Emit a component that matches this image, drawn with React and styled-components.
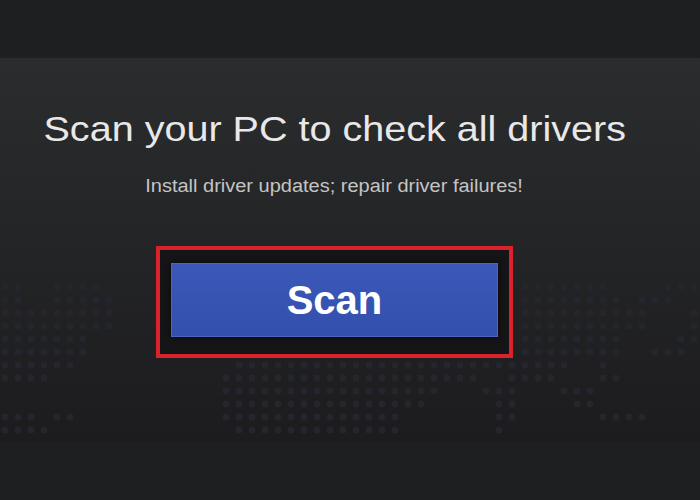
import React from "react";
import styled, { createGlobalStyle } from "styled-components";

const GlobalStyle = createGlobalStyle`
  html, body {
    margin: 0;
    padding: 0;
    background: #1e1e20;
  }
  body {
    font-family: "Liberation Sans", Arial, sans-serif;
  }
`;

// dotted world map, one list of [fromX, toX] spans per row
const MAP_ROWS = [
  [[0, 20], [55, 100], [525, 612], [660, 700]],
  [[0, 25], [55, 115], [525, 622], [640, 672]],
  [[0, 115], [525, 650], [685, 700]],
  [[0, 115], [525, 650], [685, 700]],
  [[0, 85], [525, 625], [675, 695]],
  [[0, 85], [525, 625], [655, 685]],
  [[0, 80], [230, 575], [600, 612]],
  [[0, 50], [220, 480], [500, 560], [600, 625]],
  [[45, 55], [220, 440], [475, 515], [555, 600], [630, 640]],
  [[45, 55], [220, 425], [490, 515], [570, 600], [630, 640]],
  [[0, 40], [55, 80], [220, 400], [495, 515], [570, 575], [600, 650]],
  [[0, 50], [235, 400], [495, 505]],
];

const DotMap = () => {
  const dots = [];
  MAP_ROWS.forEach((spans, j) => {
    for (let i = 0; i < 54; i++) {
      const x = 5 + i * 13;
      if (spans.some(([a, b]) => x >= a && x <= b)) {
        dots.push(<circle key={`${i}-${j}`} cx={x} cy={11 + j * 13} r="3.5" />);
      }
    }
  });
  return (
    <MapSvg width="700" height="166" viewBox="0 0 700 166">
      <g fill="#24252d">{dots}</g>
    </MapSvg>
  );
};

export default function App() {
  return (
    <>
      <GlobalStyle />
      <Page>
        <Bar />
        <Panel>
          <DotMap />
          <Content>
            <Title>Scan your PC to check all drivers</Title>
            <Subtitle>Install driver updates; repair driver failures!</Subtitle>
            <Highlight>
              <ScanButton>Scan</ScanButton>
            </Highlight>
          </Content>
        </Panel>
        <Bar />
      </Page>
    </>
  );
}

const Page = styled.div`
  width: 700px;
  height: 500px;
  display: flex;
  flex-direction: column;
  overflow: hidden;
`;

const Bar = styled.div`
  height: 58px;
  background: #1e1f21;
  flex-shrink: 0;
`;

const Panel = styled.div`
  position: relative;
  flex: 1;
  background: linear-gradient(180deg, #2b2c2e 0%, #252628 40%, #1c1c1e 100%);
  overflow: hidden;
`;

const MapSvg = styled.svg`
  position: absolute;
  left: 0;
  bottom: 0;
`;

const Content = styled.div`
  position: relative;
  width: 669px;
  display: flex;
  flex-direction: column;
  align-items: center;
  padding-top: 51px;
`;

const Title = styled.h1`
  margin: 0;
  font-weight: normal;
  font-size: 35px;
  line-height: 40px;
  color: #e8e8e8;
  white-space: nowrap;
  transform: scaleX(1.13);
`;

const Subtitle = styled.p`
  margin: 26px 0 0;
  font-size: 18px;
  line-height: 22px;
  color: #c4c4c4;
  white-space: nowrap;
  transform: scaleX(1.11);
`;

const Highlight = styled.div`
  margin-top: 49px;
  border: 4px solid #d9222b;
  padding: 13px 11px 17px 11px;
  background: #151517;
  display: flex;
`;

const ScanButton = styled.button`
  width: 327px;
  height: 74px;
  border: 1px solid #4c66c4;
  background: linear-gradient(180deg, #3b57b8 0%, #3350ad 100%);
  box-shadow: 0 0 5px rgba(0, 0, 0, 0.8);
  color: #ffffff;
  font-family: "Liberation Sans", Arial, sans-serif;
  font-weight: bold;
  font-size: 40px;
  padding: 0;
  cursor: pointer;
`;
